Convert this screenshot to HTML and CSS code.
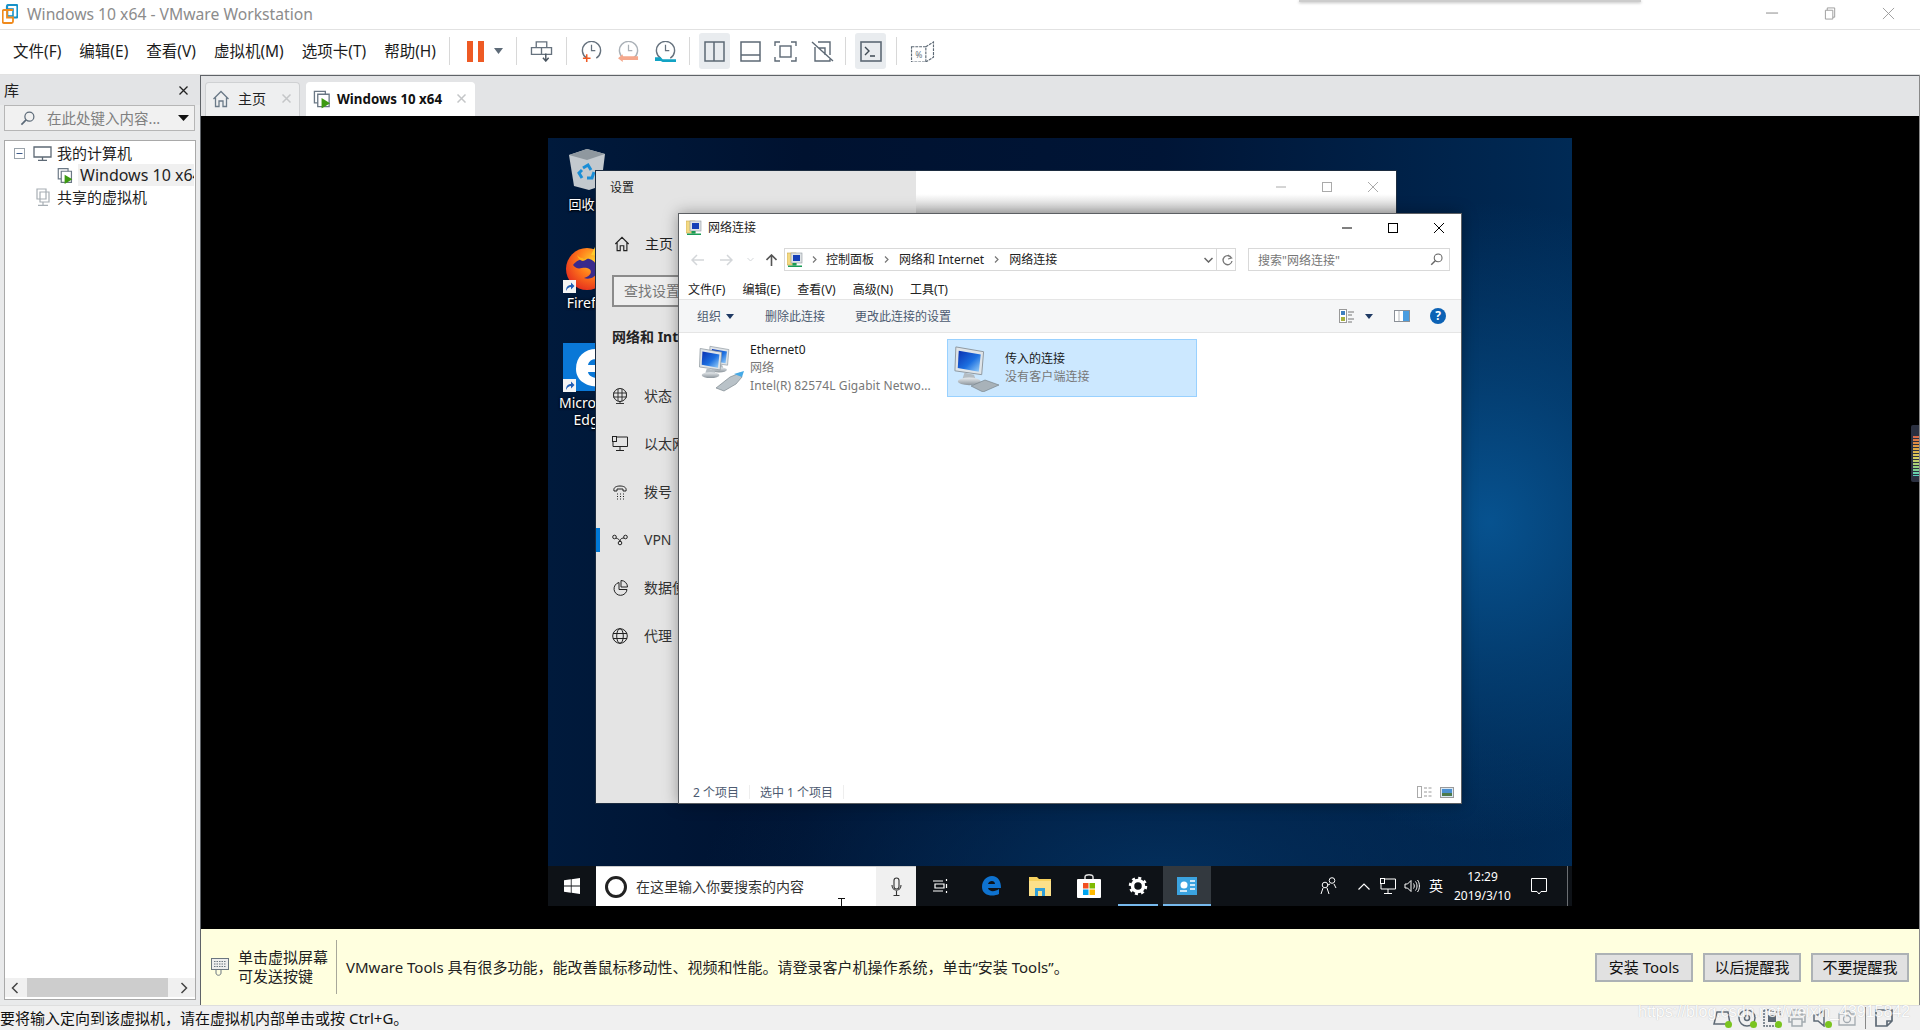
FILE: index.html
```html
<!DOCTYPE html>
<html lang="zh-CN">
<head>
<meta charset="utf-8">
<title>Windows 10 x64 - VMware Workstation</title>
<link rel="stylesheet" href="styles.css">
</head>
<body>
<svg class="defs" aria-hidden="true">
  <defs>
    <linearGradient id="scr" x1="0" y1="0" x2="1" y2="1"><stop offset="0" stop-color="#0a2fb0"/><stop offset=".55" stop-color="#1c6fe0"/><stop offset="1" stop-color="#9fd4fa"/></linearGradient>
    <linearGradient id="grey" x1="0" y1="0" x2="0" y2="1"><stop offset="0" stop-color="#e8ecef"/><stop offset="1" stop-color="#8c959c"/></linearGradient>
    <radialGradient id="fox" cx=".65" cy=".3" r=".8"><stop offset="0" stop-color="#ffcb2e"/><stop offset=".45" stop-color="#ff7a1a"/><stop offset="1" stop-color="#e2261f"/></radialGradient>
    <symbol id="netfolder" viewBox="0 0 16 16">
      <rect x="0" y="1" width="9" height="12" fill="#f3d983" stroke="#c9a94e" stroke-width=".6"/>
      <rect x="4" y="1" width="11" height="10" fill="#dfe3e6" stroke="#8f979d" stroke-width=".6"/>
      <rect x="6" y="3" width="7" height="6" fill="#1540b8"/>
      <rect x="5.500" y="11" width="4" height="2.500" fill="#1a9c56"/>
      <rect x="1" y="13.500" width="14" height="1.500" fill="#1a9c56"/>
    </symbol>
    <symbol id="pc" viewBox="0 0 46 48">
      <path d="M3 3 32 8 30 32 2 28Z" fill="#dfe4e8" stroke="#8d969d"/>
      <path d="M6 7 29 11 27 29 5 25Z" fill="url(#scr)"/>
      <path d="M12 30 22 32 24 38 10 36Z" fill="#b4bcc2"/>
      <ellipse cx="17" cy="39" rx="12" ry="4" fill="url(#grey)"/>
    </symbol>
    <symbol id="winvm" viewBox="0 0 20 20">
      <path d="M5 14H1.500V2H13V5" fill="none" stroke="#6b7885" stroke-width="1.400"/>
      <path d="M5 5H17V18H5Z" fill="none" stroke="#6b7885" stroke-width="1.400"/>
      <path d="M9 9 18 14.500 9 20Z" fill="#3d9a12"/>
    </symbol>
    <symbol id="home" viewBox="0 0 18 18">
      <path d="M1.500 9 9 1.500 16.500 9M3.500 7.500V16.500H7V11H11V16.500H14.500V7.500" fill="none" stroke="currentColor" stroke-width="1.300"/>
    </symbol>
    <symbol id="clock" viewBox="0 0 24 22">
      <path d="M7 18A9.500 9.500 0 1 1 17 18" fill="none" stroke="#66727e" stroke-width="1.500"/>
      <path d="M12 4V10H16" fill="none" stroke="#66727e" stroke-width="1.300"/>
    </symbol>
    <symbol id="mag" viewBox="0 0 16 16">
      <circle cx="10" cy="6" r="4.800" fill="none" stroke="currentColor" stroke-width="1.300"/>
      <path d="M6.500 9.500 1.500 14.500" stroke="currentColor" stroke-width="1.800"/>
    </symbol>
    <symbol id="shortcut" viewBox="0 0 13 13">
      <rect width="13" height="13" fill="#f4f4f4"/>
      <path d="M3 11C3 7 5 5 8 5V2.500L11.500 6 8 9.500V7C6 7 4.500 8 3 11Z" fill="#1f5fb8"/>
    </symbol>
  </defs>
</svg>

<header class="titlebar">
  <svg class="logo" viewBox="0 0 16 20">
    <path d="M5 5V2.500C5 1.500 5.500 1 6.500 1H14C15 1 15.500 1.500 15.500 2.500V12C15.500 13 15 13.500 14 13.500H10" fill="none" stroke="#1791c8" stroke-width="2.200"/>
    <rect x="5.500" y="5" width="5.500" height="7" fill="none" stroke="#1791c8" stroke-width="1.600"/>
    <path d="M11 6H2C1 6 .7 6.500 .7 7.500V17.500C.7 18.500 1 19 2 19H9.500C10.500 19 11 18.500 11 17.500V13.500H5V6" fill="none" stroke="#f08a1c" stroke-width="1.800"/>
  </svg>
  <span class="apptitle">Windows 10 x64 - VMware Workstation</span>
  <div class="winbtns">
    <svg class="wb" viewBox="0 0 14 14"><path d="M0 6.500H13" stroke="#999" stroke-width="1.200"/></svg>
    <svg class="wb" viewBox="0 0 14 14"><path d="M1.500 3.500H9.500V13H1.500ZM3.500 3.500V1H11.500V11H9.500" fill="none" stroke="#999"/></svg>
    <svg class="wb" viewBox="0 0 14 14"><path d="M1 1 13 13M13 1 1 13" stroke="#999"/></svg>
  </div>
  <div class="popshadow"></div>
</header>

<nav class="toolbar">
  <ul class="menu">
    <li>文件(F)</li><li>编辑(E)</li><li>查看(V)</li><li>虚拟机(M)</li><li>选项卡(T)</li><li>帮助(H)</li>
  </ul>
  <i class="sep"></i>
  <svg class="tool pause" viewBox="0 0 17 21"><rect width="6" height="21" fill="#ee5a24"/><rect x="11" width="6" height="21" fill="#ee5a24"/></svg>
  <svg class="tool caret" viewBox="0 0 9 6"><path d="M0 0H9L4.500 6Z" fill="#5e6b78"/></svg>
  <i class="sep s1"></i>
  <svg class="tool t23" viewBox="0 0 23 22"><path d="M6 1H17V7H6ZM1 7H22V14H1ZM11.500 7V14" fill="none" stroke="#66727e" stroke-width="1.400"/><path d="M16 13V20M13 17.500 16 21 19 17.500" fill="none" stroke="#4a5560" stroke-width="1.500"/></svg>
  <i class="sep s1"></i>
  <svg class="tool t23 m13" viewBox="0 0 24 22"><use href="#clock"/><path d="M3 18H11M7 14V22" stroke="#ee5a24" stroke-width="1.600"/></svg>
  <svg class="tool t23 m14" viewBox="0 0 24 22"><use href="#clock" opacity=".55"/><path d="M1 18 6 14V16H22V20H6V22Z" fill="#f5a88c"/></svg>
  <svg class="tool t23 m14" viewBox="0 0 24 22"><use href="#clock"/><path d="M1 17H7L9 19H23V22H9L7 21H1Z" fill="#12a3c4"/></svg>
  <i class="sep s2"></i>
  <span class="act"><svg class="tool t21" viewBox="0 0 21 21"><path d="M1 1H20V20H1ZM10 1V20" fill="none" stroke="#5d6975" stroke-width="1.500"/></svg></span>
  <svg class="tool t21 m10" viewBox="0 0 21 21"><path d="M1 1H20V20H1ZM1 14H20" fill="none" stroke="#5d6975" stroke-width="1.500"/></svg>
  <svg class="tool t23 m13" viewBox="0 0 23 21"><path d="M1 5V1H6M17 1H22V5M1 16V20H6M17 20H22V16" fill="none" stroke="#5d6975" stroke-width="1.400"/><rect x="6" y="5" width="11" height="11" fill="none" stroke="#5d6975" stroke-width="1.400"/></svg>
  <svg class="tool t25 m13" viewBox="0 0 25 21"><path d="M8 1H20V14M20 18V20H5V6" fill="none" stroke="#5d6975" stroke-width="1.400"/><path d="M2 1 23 20M9 7H15V14" fill="none" stroke="#5d6975" stroke-width="1.400"/></svg>
  <i class="sep s3"></i>
  <span class="act"><svg class="tool t22" viewBox="0 0 22 21"><rect x="1" y="1" width="20" height="19" fill="none" stroke="#5d6975" stroke-width="1.600"/><path d="M5 6 9 10 5 14M10 15H15" fill="none" stroke="#3f4a54" stroke-width="1.400"/></svg></span>
  <i class="sep s3"></i>
  <svg class="tool t25 m13" viewBox="0 0 25 22"><path d="M1 6H16V22H1ZM16 6 24 1V17L16 22" fill="none" stroke="#5d6975" stroke-width="1.200" stroke-dasharray="3 1"/><text x="5" y="18" class="pct">%</text></svg>
</nav>

<main class="main">
  <aside class="lib">
    <div class="libhead"><span>库</span><svg class="x9" viewBox="0 0 9 9"><path d="M.5.500 8.500 8.500M8.500.500.500 8.500" stroke="#222" stroke-width="1.300"/></svg></div>
    <div class="libsearch">
      <svg class="mag17" viewBox="0 0 16 16"><use href="#mag"/></svg>
      <span>在此处键入内容...</span>
      <svg class="libcaret" viewBox="0 0 11 6"><path d="M0 0H11L5.500 6Z" fill="#111"/></svg>
    </div>
    <div class="tree">
      <div class="treebody">
        <div class="node n1">
          <svg class="minus" viewBox="0 0 11 11"><rect x=".5" y=".5" width="10" height="10" fill="#fff" stroke="#9aa3ab"/><path d="M2.500 5.500H8.500" stroke="#3c5a8a"/></svg>
          <svg class="mon" viewBox="0 0 19 15"><path d="M1 1H18V11H1ZM9.500 11V14M5 14.300H14" fill="none" stroke="#5d6975" stroke-width="1.300"/></svg>
          <span>我的计算机</span>
        </div>
        <div class="node n2">
          <svg class="vm" viewBox="0 0 20 20"><use href="#winvm"/></svg>
          <span class="hl">Windows 10 x64</span>
        </div>
        <div class="node n3">
          <svg class="shared" viewBox="0 0 14 18"><path d="M1 1H10V11H1ZM4 4H13V14H4ZM7 14V17M2 17.300H12" fill="none" stroke="#a7aeb4" stroke-width="1.200"/></svg>
          <span>共享的虚拟机</span>
        </div>
      </div>
      <div class="hscroll">
        <svg class="chev" viewBox="0 0 8 12"><path d="M6.500 1 1.500 6 6.500 11" fill="none" stroke="#444" stroke-width="1.500"/></svg>
        <div class="thumb"></div>
        <svg class="chev" viewBox="0 0 8 12"><path d="M1.500 1 6.500 6 1.500 11" fill="none" stroke="#444" stroke-width="1.500"/></svg>
      </div>
    </div>
  </aside>

  <section class="work">
    <div class="tabs">
      <div class="tab">
        <svg class="tabhome" viewBox="0 0 18 18"><use href="#home"/></svg>
        <span>主页</span>
        <svg class="tabx" viewBox="0 0 9 9"><path d="M.5.500 8.500 8.500M8.500.500.500 8.500" stroke="#c4c6c8" stroke-width="1.500"/></svg>
      </div>
      <div class="tab on">
        <svg class="tabvm" viewBox="0 0 20 20"><use href="#winvm"/></svg>
        <b>Windows 10 x64</b>
        <svg class="tabx" viewBox="0 0 9 9"><path d="M.5.500 8.500 8.500M8.500.500.500 8.500" stroke="#c4c6c8" stroke-width="1.500"/></svg>
      </div>
    </div>

    <div class="viewport">
      <div class="desktop">
        <div class="dicon bin">
          <svg class="binsvg" viewBox="0 0 38 42"><path d="M1 7 19 1 37 6 33 38 21 42 6 38Z" fill="#c3c9ce"/><path d="M1 7 19 12 37 6 19 1Z" fill="#8f989f"/><path d="M15 20 20 17 23 22M26 24 24 30 19 30M14 30 11 25 14 22" fill="none" stroke="#1b8ed6" stroke-width="3"/></svg>
        </div>
        <span class="dlabel l-bin">回收站</span>
        <svg class="dicon fox" viewBox="0 0 46 44"><circle cx="22" cy="22" r="21" fill="url(#fox)"/><path d="M8 18C14 10 26 9 31 17 36 26 28 34 19 31 27 29 28 22 22 21 16 20 13 24 8 18Z" fill="#3a2a8c"/><path d="M26 8 30 0 33 9Z" fill="#ffcb2e"/><path d="M12 8C15 12 20 12 24 10 20 15 15 16 12 8Z" fill="#ffb21e"/></svg>
        <svg class="dicon sc1" viewBox="0 0 13 13"><use href="#shortcut"/></svg>
        <span class="dlabel l-fox">Firefox</span>
        <div class="dicon edge"><svg class="edgesvg" viewBox="0 0 44 48"><path d="M4 26C4 13 13 6 24 6 35 6 42 14 41 29H16C17 36 30 37 38 32V41C26 47 4 43 4 26ZM16 22H29C29 15 18 14 16 22Z" fill="#fff"/></svg></div>
        <svg class="dicon sc2" viewBox="0 0 13 13"><use href="#shortcut"/></svg>
        <span class="dlabel l-edge">Microsoft<br>Edge</span>

        <div class="win settings">
          <div class="setside">
            <div class="settitle">设置</div>
            <div class="sethome"><svg class="i16" viewBox="0 0 18 18"><use href="#home"/></svg><span>主页</span></div>
            <div class="setsearch">查找设置</div>
            <div class="sethead">网络和 Internet</div>
            <ul class="setnav">
              <li><svg class="i16" viewBox="0 0 16 16"><circle cx="8" cy="7" r="6.500" fill="none" stroke="#222"/><path d="M1 5H15M1 9H15M6 1V13M10 1V13M8 13V15M4 15.500H12" fill="none" stroke="#222" stroke-width=".9"/></svg><span>状态</span></li>
              <li><svg class="i16" viewBox="0 0 16 16"><path d="M5 1H15.500V10.500H1V6M8 10.500V14M4 14.500H12" fill="none" stroke="#222"/><rect x=".5" y=".5" width="4" height="5" fill="none" stroke="#222"/></svg><span>以太网</span></li>
              <li><svg class="i16" viewBox="0 0 16 16"><path d="M2 7C1 3 5 2 8 2S15 3 14 7H11V5H5V7Z" fill="none" stroke="#222"/><path d="M5 10H6M8 10H9M11 10H12M5 12.500H6M8 12.500H9M11 12.500H12M5 15H6M8 15H9M11 15H12" stroke="#222"/></svg><span>拨号</span></li>
              <li class="cur"><svg class="i16" viewBox="0 0 16 16"><circle cx="2.500" cy="5" r="1.800" fill="none" stroke="#222"/><circle cx="13.500" cy="5" r="1.800" fill="none" stroke="#222"/><circle cx="8" cy="11" r="1.800" fill="none" stroke="#222"/><path d="M4 6C7 7 9 9 7 10M12 6C9 6 7 8 9 10" fill="none" stroke="#222"/></svg><span>VPN</span></li>
              <li><svg class="i16" viewBox="0 0 16 16"><path d="M7 2.500A6.500 6.500 0 1 0 15 9.500H7ZM9 .5V7H15.500A6.500 6.500 0 0 0 9 .5Z" fill="none" stroke="#222"/></svg><span>数据使用量</span></li>
              <li><svg class="i16" viewBox="0 0 16 16"><circle cx="8" cy="8" r="7.300" fill="none" stroke="#222"/><ellipse cx="8" cy="8" rx="3.300" ry="7.300" fill="none" stroke="#222"/><path d="M1 5.500H15M1 10.500H15" stroke="#222"/></svg><span>代理</span></li>
            </ul>
          </div>
          <div class="setmain">
            <div class="setctrl">
              <svg class="wb2" viewBox="0 0 10 10"><path d="M0 5H10" stroke="#aaa"/></svg>
              <svg class="wb2" viewBox="0 0 10 10"><rect x=".5" y=".5" width="9" height="9" fill="none" stroke="#aaa"/></svg>
              <svg class="wb2" viewBox="0 0 10 10"><path d="M0 0 10 10M10 0 0 10" stroke="#aaa"/></svg>
            </div>
          </div>
        </div>

        <div class="win net">
          <div class="nettitle">
            <svg class="i16" viewBox="0 0 16 16"><use href="#netfolder"/></svg>
            <span>网络连接</span>
            <div class="netctrl">
              <svg class="wb2" viewBox="0 0 10 10"><path d="M0 5H10" stroke="#000"/></svg>
              <svg class="wb2" viewBox="0 0 10 10"><rect x=".5" y=".5" width="9" height="9" fill="none" stroke="#000"/></svg>
              <svg class="wb2" viewBox="0 0 10 10"><path d="M0 0 10 10M10 0 0 10" stroke="#000"/></svg>
            </div>
          </div>
          <div class="netaddr">
            <svg class="nav12" viewBox="0 0 13 12"><path d="M13 6H1M6 1 1 6 6 11" fill="none" stroke="#d3d6d9" stroke-width="1.500"/></svg>
            <svg class="nav12 fw" viewBox="0 0 13 12"><path d="M0 6H12M7 1 12 6 7 11" fill="none" stroke="#d3d6d9" stroke-width="1.500"/></svg>
            <svg class="nav6" viewBox="0 0 7 5"><path d="M.5 1 3.500 4 6.500 1" fill="none" stroke="#d3d6d9"/></svg>
            <svg class="nav11" viewBox="0 0 11 12"><path d="M5.500 12V1M.5 6 5.500 1 10.500 6" fill="none" stroke="#555" stroke-width="1.600"/></svg>
            <div class="addrbox">
              <svg class="i16" viewBox="0 0 16 16"><use href="#netfolder"/></svg>
              <svg class="crumb first" viewBox="0 0 5 7"><path d="M1 .5 4 3.500 1 6.500" fill="none" stroke="#777" stroke-width="1.200"/></svg>
              <span>控制面板</span>
              <svg class="crumb" viewBox="0 0 5 7"><path d="M1 .5 4 3.500 1 6.500" fill="none" stroke="#777" stroke-width="1.200"/></svg>
              <span>网络和 Internet</span>
              <svg class="crumb" viewBox="0 0 5 7"><path d="M1 .5 4 3.500 1 6.500" fill="none" stroke="#777" stroke-width="1.200"/></svg>
              <span>网络连接</span>
              <svg class="addrdrop" viewBox="0 0 9 6"><path d="M.5 1 4.500 5 8.500 1" fill="none" stroke="#666" stroke-width="1.500"/></svg>
              <i class="addrsep"></i>
              <svg class="refresh" viewBox="0 0 11 12"><path d="M9.500 4A4.500 4.500 0 1 0 10 7M6 1 9.500 4 6 5" fill="none" stroke="#777" stroke-width="1.300"/></svg>
            </div>
            <div class="netsearch"><span>搜索"网络连接"</span><svg class="mag12" viewBox="0 0 16 16"><use href="#mag"/></svg></div>
          </div>
          <ul class="netmenu"><li>文件(F)</li><li>编辑(E)</li><li>查看(V)</li><li>高级(N)</li><li>工具(T)</li></ul>
          <div class="nettools">
            <span class="org">组织</span>
            <svg class="dark8" viewBox="0 0 8 5"><path d="M0 0H8L4 5Z" fill="#1f3a64"/></svg>
            <span class="del">删除此连接</span>
            <span class="chg">更改此连接的设置</span>
            <svg class="viewi" viewBox="0 0 15 14"><rect x=".5" y=".5" width="7" height="13" fill="#fff" stroke="#999"/><rect x="2" y="2" width="4" height="4" fill="#3f7fbf"/><rect x="2" y="8" width="4" height="4" fill="#a6b03c"/><path d="M9 3H15M9 6H13M9 10H15M9 13H13" stroke="#777"/></svg>
            <svg class="dark8 vd" viewBox="0 0 8 5"><path d="M0 0H8L4 5Z" fill="#1f3a64"/></svg>
            <svg class="pane" viewBox="0 0 16 12"><rect x=".5" y=".5" width="15" height="11" fill="#fff" stroke="#8b9097"/><rect x="9" y="1" width="6" height="10" fill="#4a9de0"/><path d="M5 1V11" stroke="#b5b9bd"/></svg>
            <span class="help">?</span>
          </div>
          <div class="netitems">
            <div class="item">
              <svg class="pcic" viewBox="0 0 46 48"><use href="#pc" x="10" y="0" width="30" height="32"/><use href="#pc" y="2" width="34" height="36"/><path d="M18 44 32 33 42 29 44 33 38 40 26 47Z" fill="#b9c2c8" stroke="#6f7a82" stroke-width=".6"/><path d="M36 30 46 27 44 33Z" fill="#45a9e6"/></svg>
              <div class="itemtext"><p>Ethernet0</p><p class="mut">网络</p><p class="mut">Intel(R) 82574L Gigabit Netwo...</p></div>
            </div>
            <div class="item sel">
              <svg class="pcic" viewBox="0 0 46 48"><use href="#pc" width="44" height="46"/><path d="M18 42 32 36 46 41 30 48Z" fill="#a8b2b9" stroke="#6f7a82" stroke-width=".6"/></svg>
              <div class="itemtext"><p>传入的连接</p><p class="mut">没有客户端连接</p></div>
            </div>
          </div>
          <div class="netstatus">
            <span>2 个项目</span><i></i><span>选中 1 个项目</span><i></i>
            <svg class="st1" viewBox="0 0 16 12"><rect x=".5" y=".5" width="4" height="11" fill="#fff" stroke="#aaa"/><path d="M7 2H16M7 6H16M7 10H16" stroke="#999" stroke-dasharray="3 1.500"/></svg>
            <svg class="st2" viewBox="0 0 14 11"><rect x=".5" y=".5" width="13" height="10" fill="#d8e8f5" stroke="#999"/><rect x="2" y="2" width="10" height="4" fill="#4a8fd0"/><rect x="2" y="6" width="10" height="3" fill="#4d7a4a"/></svg>
          </div>
        </div>

        <div class="taskbar">
          <div class="tstart"><svg class="wlogo" viewBox="0 0 16 16"><path d="M0 2.300 6.800 1.300V7.600H0ZM7.600 1.200 16 0V7.600H7.600ZM0 8.400H6.800V14.700L0 13.700ZM7.600 8.400H16V16L7.600 14.800Z" fill="#fff"/></svg></div>
          <div class="tsearch">
            <span class="ring"></span>
            <span class="tsq">在这里输入你要搜索的内容</span>
            <span class="micbox"><svg class="mic" viewBox="0 0 11 20"><rect x="3" y="1" width="5" height="11" rx="2.500" fill="none" stroke="#333" stroke-width="1.100"/><path d="M1 8C1 15 10 15 10 8M5.500 14V18M2.500 18.500H8.500" fill="none" stroke="#333" stroke-width="1.100"/></svg></span>
          </div>
          <div class="tb"><svg class="tv" viewBox="0 0 16 16"><path d="M1 3H11M1 13H11M3 6H12V10H3Z" fill="none" stroke="#fff" stroke-width="1.200"/><path d="M14.500 1V3M14.500 6V10M14.500 13V15" stroke="#fff" stroke-width="1.200"/></svg></div>
          <div class="tb first"><svg class="ti" viewBox="0 0 20 20"><path d="M1 11C1 5 5 0 11 0 17 0 20 5 20 12H7C8 16 14 16 18 13V18C12 21 1 20 1 11ZM7 8H14C14 4 8 4 7 8Z" fill="#0e72cf"/></svg></div>
          <div class="tb"><svg class="ti w22" viewBox="0 0 22 20"><path d="M0 1H8L10 3H22V20H0Z" fill="#f6d15f"/><rect x="0" y="5" width="22" height="15" fill="#fbe08a"/><path d="M6 20V12H16V20H13V15H9V20Z" fill="#2f9ed8"/></svg></div>
          <div class="tb"><svg class="ti tall" viewBox="0 0 24 24"><path d="M8 6V3C8 0 16 0 16 3V6" fill="none" stroke="#ddd" stroke-width="1.500"/><rect y="5" width="24" height="19" rx="1" fill="#fff"/><rect x="6" y="9" width="5.500" height="5.500" fill="#f25022"/><rect x="12.500" y="9" width="5.500" height="5.500" fill="#7fba00"/><rect x="6" y="15.500" width="5.500" height="5.500" fill="#00a4ef"/><rect x="12.500" y="15.500" width="5.500" height="5.500" fill="#ffb900"/></svg></div>
          <div class="tb run"><svg class="ti" viewBox="0 0 20 20"><circle cx="10" cy="10" r="5.500" fill="none" stroke="#fff" stroke-width="3.500"/><circle cx="10" cy="10" r="8" fill="none" stroke="#fff" stroke-width="2.500" stroke-dasharray="3 3.280"/></svg></div>
          <div class="tb run act2"><svg class="ti" viewBox="0 0 20 18"><rect width="20" height="18" fill="#3ba3e0"/><circle cx="7" cy="8" r="3.500" fill="#fff"/><path d="M13 4H18M13 8H18M13 12H18M3 14H10" stroke="#fff" stroke-width="1.500"/></svg></div>
          <div class="tray">
            <svg class="tr16 ppl" viewBox="0 0 17 18"><circle cx="12" cy="3.500" r="2.800" fill="none" stroke="#fff"/><circle cx="5" cy="8" r="2.800" fill="none" stroke="#fff"/><path d="M1 17 3 11M7 11 9 17M8 8 10 7M14 7 16 11" fill="none" stroke="#fff"/></svg>
            <svg class="tr12" viewBox="0 0 12 7"><path d="M.5 6.500 6 1 11.500 6.500" fill="none" stroke="#fff" stroke-width="1.200"/></svg>
            <svg class="tr16 m10t" viewBox="0 0 16 16"><path d="M5 1H15.500V11H1V6M8 11V15M4 15.500H12" fill="none" stroke="#fff"/><rect x=".5" y=".5" width="4" height="5" fill="none" stroke="#fff"/></svg>
            <svg class="tr16 m8t" viewBox="0 0 16 16"><path d="M1 6H3.500L7 2.500V13.500L3.500 10H1Z" fill="none" stroke="#fff"/><path d="M9.500 5.500C10.500 7 10.500 9 9.500 10.500M11.500 3.500C13.500 6 13.500 10 11.500 12.500M13.500 2C16 5 16 11 13.500 14" fill="none" stroke="#fff"/></svg>
            <span class="ime">英</span>
            <div class="clock"><span>12:29</span><span>2019/3/10</span></div>
            <svg class="tr16 notif" viewBox="0 0 16 17"><path d="M.5.500H15.500V13.500H10L8 16 6 13.500H.5Z" fill="none" stroke="#fff"/></svg>
            <i class="peek"></i>
          </div>
        </div>
        <svg class="ibeam" viewBox="0 0 7 9"><path d="M0 .5H7M3.500 .5V9" stroke="#111"/></svg>
      </div>
      <div class="edgehandle"><div class="meter"></div></div>
    </div>

    <div class="hint">
      <svg class="kbd" viewBox="0 0 18 18"><rect x=".5" y=".5" width="17" height="11" fill="#eee" stroke="#6b7680"/><path d="M3 3.500H15M3 6H15M3 8.500H15" stroke="#6b7680" stroke-dasharray="1.500 1"/><path d="M5 12V15C5 18 10 18 10 15V12" fill="none" stroke="#6b7680"/></svg>
      <div class="hintleft"><span>单击虚拟屏幕</span><span>可发送按键</span></div>
      <p class="hintmsg">VMware Tools 具有很多功能，能改善鼠标移动性、视频和性能。请登录客户机操作系统，单击“安装 Tools”。</p>
      <div class="hintbtns"><button class="btn">安装 Tools</button><button class="btn">以后提醒我</button><button class="btn">不要提醒我</button></div>
    </div>
  </section>
</main>

<footer class="statusbar">
  <span class="stmsg">要将输入定向到该虚拟机，请在虚拟机内部单击或按 Ctrl+G。</span>
  <div class="devs">
    <span class="dev"><svg viewBox="0 0 18 18"><path d="M1 15 4 3H15L17 15ZM1 15H17" fill="none" stroke="#5d6975" stroke-width="1.500"/></svg><i class="led"></i></span>
    <span class="dev"><svg viewBox="0 0 18 18"><circle cx="9" cy="9" r="8" fill="none" stroke="#5d6975" stroke-width="1.500"/><circle cx="9" cy="9" r="2.500" fill="none" stroke="#5d6975" stroke-width="1.500"/></svg><i class="led"></i></span>
    <span class="dev"><svg viewBox="0 0 18 18"><path d="M1 1H7L9 3H17V8M1 1V17H17" fill="none" stroke="#5d6975" stroke-width="1.500" stroke-dasharray="2 1"/><path d="M5 6H13V13H5Z" fill="#5d6975"/></svg><i class="led"></i></span>
    <span class="dev"><svg viewBox="0 0 18 18"><path d="M4 6V1H14V6M4 13H1V6H17V13H14M4 10H14V17H4Z" fill="none" stroke="#a3aab0" stroke-width="1.500"/></svg></span>
    <span class="dev"><svg viewBox="0 0 18 18"><path d="M1 6H5L11 1V17L5 12H1Z" fill="none" stroke="#5d6975" stroke-width="1.500"/></svg><i class="led"></i></span>
    <span class="dev"><svg viewBox="0 0 18 18"><path d="M1 5H5L7 2H11L13 5H17V16H1Z" fill="none" stroke="#a3aab0" stroke-width="1.300"/><circle cx="9" cy="10" r="3.500" fill="none" stroke="#a3aab0" stroke-width="1.300"/></svg></span>
    <i class="devsep"></i>
    <span class="dev"><svg viewBox="0 0 18 18"><path d="M1 1H17V12L12 17H1ZM17 12H12V17" fill="none" stroke="#5d6975" stroke-width="1.700"/></svg></span>
  </div>
  <span class="wm">https://blog.csdn.net/weixin_43915842</span>
</footer>
</body>
</html>
```
FILE: styles.css
```css
* { box-sizing: border-box; }
html, body { margin: 0; height: 100%; }
body {
  width: 1920px; height: 1030px; overflow: hidden;
  display: grid; grid-template-rows: 30px 45px 930px 25px;
  font-family: "Noto Sans", "Noto Sans CJK SC", sans-serif;
  font-size: 15px; color: #222; background: #fff;
}
svg { display: block; flex: none; }
ul { list-style: none; margin: 0; padding: 0; }
p { margin: 0; }
i { display: block; }
.defs { position: absolute; width: 0; height: 0; }

/* title bar */
.titlebar { position: relative; display: flex; align-items: center; padding-left: 2px; border-bottom: 1px solid #e2e2e2; }
.logo { width: 16px; height: 20px; margin-top: -1px; }
.apptitle { margin-left: 9px; margin-top: -1px; font-size: 15.7px; line-height: 20px; color: #8c8c8c; }
.winbtns { margin-left: auto; display: flex; gap: 45px; padding-right: 25px; margin-top: -2px; }
.wb { width: 13px; height: 13px; }
.popshadow { position: absolute; left: 1299px; top: 0; width: 342px; height: 2px; background: #ccc; box-shadow: 0 1px 3px #bbb; }

/* toolbar */
.toolbar { display: flex; align-items: center; padding: 0 0 2px 13px; border-bottom: 1px solid #e2e2e2; }
.menu { display: flex; gap: 18px; width: 436px; font-size: 15.5px; line-height: 20px; color: #1c1c1c; white-space: nowrap; }
.sep { width: 1px; height: 28px; background: #d8d8d8; }
.s1 { margin-left: 13px; }
.s2 { margin-left: 12px; }
.s3 { margin-left: 10px; }
.tool { height: 21px; }
.pause { width: 17px; margin-left: 17px; }
.caret { width: 9px; height: 6px; margin-left: 10px; }
.t23 { width: 23px; margin-left: 13px; }
.t21 { width: 21px; }
.t22 { width: 22px; }
.t25 { width: 25px; }
.m10 { margin-left: 10px; }
.m13 { margin-left: 13px; }
.m14 { margin-left: 14px; }
.act { display: flex; align-items: center; justify-content: center; width: 31px; height: 36px; margin-left: 9px; background: #e9ecef; border-radius: 3px; }
.pct { font-size: 9px; fill: #6b7680; }

/* library */
.main { display: grid; grid-template-columns: 200px 1fr; min-height: 0; }
.lib { display: flex; flex-direction: column; background: #e9eaeb; padding: 0 4px; }
.libhead { height: 30px; margin: 0 -4px; padding: 0 12px 0 4px; display: flex; align-items: center; justify-content: space-between; background: #e3e4e6; }
.libhead span { font-size: 15px; line-height: 20px; }
.x9 { width: 9px; height: 9px; }
.libsearch { height: 26px; width: 191px; display: flex; align-items: center; padding: 0 5px 0 14px; background: #f1f1f1; border: 1px solid #b6b6b6; color: #5c6a78; }
.libsearch span { margin-left: 11px; font-size: 14.5px; line-height: 20px; color: #808080; white-space: nowrap; }
.mag17 { width: 17px; height: 15px; }
.libcaret { width: 11px; height: 6px; margin-left: auto; }
.tree { margin-top: 9px; width: 192px; height: 860px; display: flex; flex-direction: column; border: 1px solid #a9a9a9; background: #fff; overflow: hidden; }
.treebody { flex: 1; padding-top: 1px; }
.node { display: flex; align-items: center; height: 22px; white-space: nowrap; font-size: 15px; line-height: 20px; color: #1f1f1f; }
.n1 { padding-left: 9px; }
.n2 { padding-left: 52px; }
.n3 { padding-left: 31px; }
.minus { width: 11px; height: 11px; }
.mon { width: 19px; height: 15px; margin-left: 8px; }
.n1 span { margin-left: 5px; }
.vm { width: 17px; height: 17px; }
.hl { margin-left: 4px; width: 116px; height: 22px; padding-left: 2px; background: #f0f0f0; overflow: hidden; font-size: 16px; line-height: 22px; }
.shared { width: 14px; height: 18px; }
.n3 span { margin-left: 7px; }
.hscroll { height: 19px; display: flex; align-items: center; background: #f0f0f0; margin-bottom: 2px; padding: 0 7px 0 6px; }
.chev { width: 8px; height: 12px; }
.thumb { width: 141px; height: 19px; margin: 0 12px 0 8px; background: #cdcdcd; }

/* work area */
.work { display: flex; flex-direction: column; border-left: 1px solid #5f6368; border-right: 1px solid #8a8a8a; min-width: 0; }
.tabs { height: 41px; display: flex; align-items: flex-end; gap: 6px; padding-left: 4px; background: #e3e4e6; border-top: 1px solid #5f6368; }
.tab { height: 34px; width: 95px; display: flex; align-items: center; padding: 0 0 2px 6px; background: #eeeff0; border: 1px solid #cfd1d3; border-bottom: 0; border-radius: 4px 4px 0 0; font-size: 14px; }
.tab span { margin-left: 8px; line-height: 20px; }
.tab.on { width: 169px; background: #fff; border-color: #fff; }
.tab b { margin-left: 5px; font-size: 13.3px; line-height: 20px; font-weight: 700; white-space: nowrap; color: #111; }
.tabhome { width: 18px; height: 18px; color: #6b7a88; }
.tabvm { width: 19px; height: 20px; }
.tabx { width: 9px; height: 9px; margin-left: auto; margin-right: 8px; }

.viewport { position: relative; height: 813px; background: #000; display: flex; justify-content: center; padding-top: 22px; }
.edgehandle { position: absolute; right: 0; top: 309px; width: 8px; height: 57px; padding: 10px 0 6px 2px; background: #2b3040; border-radius: 2px 0 0 2px; }
.meter {
  height: 100%;
  background:
    repeating-linear-gradient(#2b3040 0 1px, transparent 1px 3px),
    linear-gradient(#d8604a 0%, #e0a040 30%, #d8d060 55%, #90d080 80%, #50d0c0 100%);
}
.desktop {
  position: relative; width: 1024px; height: 768px; overflow: hidden;
  display: flex; flex-direction: column; justify-content: flex-end;
  background:
    radial-gradient(ellipse 280px 320px at 92% 50%, #07528f 0%, rgba(5,70,125,.7) 45%, rgba(0,40,80,0) 100%),
    radial-gradient(ellipse 460px 200px at 60% 96%, #032f5c 0%, rgba(2,40,75,0) 100%),
    linear-gradient(90deg, #001a3c 0%, #001230 25%, #001536 60%, #002a55 100%);
}

/* desktop icons */
.dicon { position: absolute; }
.bin { left: 20px; top: 10px; }
.binsvg { width: 38px; height: 42px; }
.fox { left: 17px; top: 109px; width: 46px; height: 44px; }
.sc1 { left: 15px; top: 142px; width: 13px; height: 13px; }
.edge { left: 15px; top: 205px; width: 60px; height: 48px; background: #0a78d7; }
.edgesvg { width: 44px; height: 48px; margin-left: 9px; }
.sc2 { left: 15px; top: 241px; width: 13px; height: 13px; }
.dlabel { position: absolute; width: 76px; color: #fff; font-size: 14px; line-height: 17px; text-align: center; text-shadow: 0 0 3px #000, 0 1px 2px #000; }
.l-bin { left: 2px; top: 58px; font-size: 13px; }
.l-fox { left: 3px; top: 156px; }
.l-edge { left: 4px; top: 256px; }

/* windows */
.win { position: absolute; display: flex; }
.settings { left: 48px; top: 33px; width: 800px; height: 632px; background: #fff; box-shadow: 0 0 0 1px #1c2c40; }
.setside { width: 320px; background: #e4e4e4; padding-left: 16px; font-size: 14px; color: #222; overflow: hidden; white-space: nowrap; }
.settitle { margin: 9px 0 0 -2px; font-size: 12px; line-height: 16px; }
.sethome { display: flex; align-items: center; margin-top: 39px; height: 18px; }
.sethome .i16 { margin-left: 2px; }
.sethome span { margin-left: 15px; line-height: 18px; }
.i16 { width: 16px; height: 16px; color: #222; }
.setsearch { margin-top: 22px; width: 200px; height: 32px; padding-left: 10px; border: 2px solid #8b8b8b; font-size: 14px; line-height: 28px; color: #777; background: #eee; }
.sethead { margin-top: 19px; font-weight: 700; font-size: 14px; line-height: 22px; }
.setnav { margin-top: 24px; margin-left: -16px; }
.setnav li { position: relative; display: flex; align-items: center; height: 48px; padding-left: 16px; color: #333; }
.setnav li span { margin-left: 16px; line-height: 20px; }
.setnav .cur::before { content: ""; position: absolute; left: 0; top: 12px; width: 4px; height: 24px; background: #0078d7; }
.setmain { flex: 1; height: 42px; background: linear-gradient(#fff 55%, #c9c9c9); }
.setctrl { display: flex; justify-content: flex-end; gap: 36px; padding: 11px 18px 0 0; }
.wb2 { width: 10px; height: 10px; }

.net { left: 130px; top: 75px; width: 784px; height: 591px; flex-direction: column; background: #fff; border: 1px solid #5c5f63; box-shadow: 0 0 14px rgba(0,0,0,.35); font-size: 12px; color: #222; }
.nettitle { height: 28px; display: flex; align-items: center; padding-left: 7px; }
.nettitle span { margin-left: 6px; line-height: 16px; }
.netctrl { margin-left: auto; display: flex; gap: 36px; padding-right: 17px; }
.netaddr { display: flex; align-items: center; height: 23px; margin-top: 6px; padding-left: 12px; }
.nav12 { width: 13px; height: 12px; }
.fw { margin-left: 16px; }
.nav6 { width: 7px; height: 5px; margin-left: 14px; }
.nav11 { width: 11px; height: 12px; margin-left: 12px; }
.addrbox { width: 452px; height: 23px; margin-left: 7px; display: flex; align-items: center; padding-left: 2px; border: 1px solid #d9d9d9; white-space: nowrap; }
.crumb { width: 5px; height: 7px; margin: 0 10px; }
.crumb.first { margin: 0 9px; }
.addrbox span { line-height: 16px; }
.addrdrop { width: 9px; height: 6px; margin-left: auto; }
.addrsep { width: 1px; height: 21px; margin-left: 3px; background: #d9d9d9; }
.refresh { width: 11px; height: 12px; margin: 0 2px 0 5px; }
.netsearch { width: 202px; height: 23px; margin-left: 12px; display: flex; align-items: center; justify-content: space-between; padding: 0 6px 0 9px; border: 1px solid #d9d9d9; color: #777; white-space: nowrap; }
.mag12 { width: 13px; height: 13px; color: #666; }
.netmenu { display: flex; gap: 17px; height: 29px; padding: 10px 0 0 9px; line-height: 17px; border-bottom: 1px solid #e5e5e5; white-space: nowrap; }
.nettools { height: 33px; flex: none; display: flex; align-items: center; padding-left: 18px; background: #f5f6f7; border-bottom: 1px solid #e5e5e5; color: #4c5a70; white-space: nowrap; }
.dark8 { width: 8px; height: 5px; margin-left: 5px; }
.del { margin-left: 31px; }
.chg { margin-left: 30px; }
.viewi { width: 15px; height: 14px; margin-left: auto; }
.vd { margin-left: 11px; }
.pane { width: 16px; height: 12px; margin-left: 21px; }
.help { width: 16px; height: 16px; margin: 0 15px 0 20px; border-radius: 50%; background: #0c62b5; color: #fff; font-size: 12px; font-weight: 700; line-height: 16px; text-align: center; }
.netitems { flex: 1; display: flex; gap: 5px; padding: 6px 0 0 13px; align-items: flex-start; }
.item { width: 250px; height: 58px; display: flex; align-items: center; padding-left: 5px; border: 1px solid transparent; white-space: nowrap; }
.item.sel { background: #cce8ff; border-color: #99d1ff; }
.pcic { width: 46px; height: 48px; }
.itemtext { margin-left: 6px; line-height: 18px; color: #1a1a1a; }
.mut { color: #777; letter-spacing: .1px; }
.netstatus { height: 22px; flex: none; display: flex; align-items: center; padding-left: 14px; color: #4c5a70; white-space: nowrap; }
.netstatus i { width: 1px; height: 14px; margin: 0 10px; background: #eee; }
.st1 { width: 16px; height: 12px; margin-left: auto; }
.st2 { width: 14px; height: 11px; margin: 0 7px; }

/* taskbar */
.taskbar { position: relative; height: 40px; display: flex; background: #0e1217; color: #fff; font-size: 12px; }
.tstart { width: 48px; display: flex; align-items: center; justify-content: center; }
.wlogo { width: 16px; height: 16px; }
.tsearch { width: 320px; display: flex; align-items: center; background: #fff; border-top: 1px solid #ccc; padding-left: 9px; }
.ring { width: 22px; height: 22px; border: 3px solid #222; border-radius: 50%; }
.tsq { margin-left: 9px; font-size: 14px; line-height: 20px; color: #333; white-space: nowrap; }
.micbox { margin-left: auto; width: 40px; height: 100%; display: flex; align-items: center; justify-content: center; background: #f0f0f0; }
.mic { width: 11px; height: 20px; }
.tb { position: relative; width: 48px; display: flex; align-items: center; justify-content: center; }
.tb + .tb { margin-left: 1px; }
.tb.first { margin-left: 3px; }
.tb.run::after { content: ""; position: absolute; left: 4px; right: 4px; bottom: 0; height: 2px; background: #76b9ed; }
.tb.act2 { background: #33393f; }
.tb.act2::after { left: 0; right: 0; }
.tv { width: 16px; height: 16px; }
.ti { width: 20px; height: 20px; }
.w22 { width: 22px; }
.tall { width: 24px; height: 24px; }
.tray { margin-left: auto; display: flex; align-items: center; padding-right: 4px; }
.tr16 { width: 16px; height: 16px; }
.ppl { width: 17px; height: 18px; }
.tr12 { width: 12px; height: 7px; margin-left: 21px; }
.m10t { margin-left: 10px; }
.m8t { margin-left: 8px; }
.ime { margin-left: 9px; font-size: 14px; line-height: 18px; }
.clock { margin-left: 10px; width: 59px; display: flex; flex-direction: column; align-items: center; line-height: 19px; white-space: nowrap; }
.notif { margin-left: 19px; height: 17px; }
.peek { width: 1px; height: 40px; margin-left: 20px; background: #6a6e72; }
.ibeam { position: absolute; left: 290px; top: 760px; width: 7px; height: 9px; }

/* hint bar */
.hint { height: 76px; display: flex; align-items: center; padding-left: 10px; background: #ffffdf; font-size: 15px; color: #222; white-space: nowrap; }
.kbd { width: 18px; height: 18px; }
.hintleft { margin-left: 9px; height: 54px; width: 99px; display: flex; flex-direction: column; justify-content: center; border-right: 1px solid #a8a89a; line-height: 19px; }
.hintmsg { margin-left: 9px; font-size: 15px; line-height: 20px; }
.hintbtns { margin-left: auto; display: flex; gap: 10px; padding-right: 10px; }
.btn { width: 98px; height: 29px; padding: 0; background: #e1e1e1; border: 2px solid #adb2b5; border-radius: 0; font: 15px/20px "Noto Sans", "Noto Sans CJK SC", sans-serif; color: #111; }

/* status bar */
.statusbar { position: relative; display: flex; align-items: center; background: #f0f0f0; border-top: 1px solid #dedede; font-size: 15px; color: #111; white-space: nowrap; }
.stmsg { line-height: 20px; }
.devs { margin-left: auto; display: flex; align-items: center; gap: 7px; padding-right: 27px; }
.dev { position: relative; width: 18px; height: 18px; }
.dev svg { width: 18px; height: 18px; }
.led { position: absolute; right: -1px; bottom: -1px; width: 7px; height: 7px; border-radius: 50%; background: #7ac41f; }
.devsep { width: 1px; height: 22px; margin: 0 2px; background: #888; }
.wm { position: absolute; left: 1638px; top: -4px; font: 16px/20px "Liberation Sans", sans-serif; color: #fff; text-shadow: 0 0 1px #aaa; opacity: .85; }
```
